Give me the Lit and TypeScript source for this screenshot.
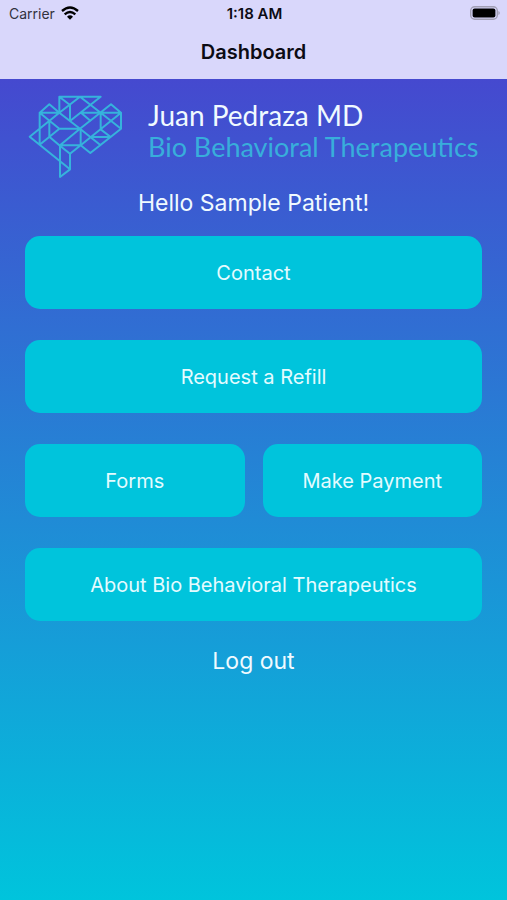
import { LitElement, html, css } from "lit";
import { customElement } from "lit/decorators.js";

@customElement("app-root")
export class AppRoot extends LitElement {
  static styles = css`
    :host {
      display: flex;
      flex-direction: column;
      min-height: 100vh;
      font-family: Inter, "Liberation Sans", sans-serif;
      color: #f0faff;
    }
    .top {
      background: #d9d7fb;
      color: #0c0b14;
      padding-bottom: 1px;
    }
    .status {
      display: grid;
      grid-template-columns: 1fr auto 1fr;
      align-items: center;
      height: 26px;
      padding: 0 7px 0 9px;
      font-size: 14px;
    }
    .carrier {
      display: flex;
      align-items: center;
      gap: 6px;
      color: #33323e;
    }
    .time {
      font-size: 15px;
      font-weight: 600;
    }
    .battery {
      justify-self: end;
    }
    svg {
      display: block;
      flex: none;
    }
    .title {
      margin: 0;
      text-align: center;
      font-size: 20px;
      line-height: 52px;
      font-weight: 600;
    }
    main {
      flex: 1;
      display: flex;
      flex-direction: column;
      padding: 16px 25px 24px;
      background: linear-gradient(#4549cf, #00c4dc);
    }
    .brand {
      display: flex;
      gap: 24px;
      padding: 0 3px;
    }
    .names {
      font-family: Lato, sans-serif;
      font-size: 28px;
      line-height: 32px;
      padding-top: 4px;
      white-space: nowrap;
    }
    .practice {
      font-size: 27px;
      color: #38aedb;
    }
    .hello {
      margin: 9px 0 18px;
      text-align: center;
      font-size: 23px;
      line-height: 30px;
      font-weight: 400;
    }
    .actions {
      display: grid;
      grid-template-columns: 1fr 1fr;
      column-gap: 18px;
      row-gap: 31px;
    }
    .action {
      height: 73px;
      border: 0;
      padding: 0;
      border-radius: 15px;
      background: #00c4dc;
      color: #e4fbff;
      font: inherit;
      font-size: 20px;
      cursor: pointer;
    }
    .wide {
      grid-column: 1 / -1;
    }
    .logout {
      align-self: center;
      margin-top: 24px;
      border: 0;
      padding: 0;
      background: none;
      color: inherit;
      font: inherit;
      font-size: 23px;
      line-height: 32px;
      cursor: pointer;
    }
  `;

  render() {
    return html`
      <header class="top">
        <div class="status">
          <div class="carrier">
            <span>Carrier</span>
            <svg width="18" height="14" viewBox="0 0 54 42" fill="none" stroke="#000" stroke-width="7" aria-hidden="true">
              <path d="M3 15 Q27 -6 51 15" />
              <path d="M11 25 Q27 11 43 25" />
              <path d="M27 41 L18 32 Q27 24 36 32 Z" fill="#000" stroke="none" />
            </svg>
          </div>
          <div class="time">1:18 AM</div>
          <svg class="battery" width="30" height="14" viewBox="0 0 30 14" aria-hidden="true">
            <rect x="0.7" y="0.7" width="26.6" height="12.6" rx="4" fill="none" stroke="#a19fb5" stroke-width="1.4" />
            <rect x="2.6" y="2.6" width="22.8" height="8.8" rx="2" fill="#000" />
            <path d="M28.4 5 Q29.8 5.6 29.8 7 T28.4 9 Z" fill="#a19fb5" />
          </svg>
        </div>
        <h1 class="title">Dashboard</h1>
      </header>
      <main>
        <div class="brand">
          <svg width="96" height="84" viewBox="24 32 288 252" fill="none" stroke="#36b3dc" stroke-width="6" stroke-linejoin="round" aria-hidden="true">
            <path d="M118 85 V37 H242 L150 110 V62 L118 37 M118 85 L180 37 L242 85 H183 L212 110 M118 85 L180 133" />
            <path d="M59 85 L88 60 L118 85 L29 157 L150 255 L120 278 V183 L180 133 H118 L59 85 H118 M59 85 V181 L118 133 M88 109 V157 L118 183 H182 V133 M118 183 L150 208 V255 M150 208 L182 183" />
            <path d="M180 133 L273 60 L303 85 V133 L211 206 L182 183 L303 85 H242 L303 133 M242 85 V135 L272 158 H213 M180 133 L242 183" />
          </svg>
          <div class="names">
            <div>Juan Pedraza MD</div>
            <div class="practice">Bio Behavioral Therapeutics</div>
          </div>
        </div>
        <h2 class="hello">Hello Sample Patient!</h2>
        <div class="actions">
          <button class="action wide">Contact</button>
          <button class="action wide">Request a Refill</button>
          <button class="action">Forms</button>
          <button class="action">Make Payment</button>
          <button class="action wide">About Bio Behavioral Therapeutics</button>
        </div>
        <button class="logout">Log out</button>
      </main>
    `;
  }
}
